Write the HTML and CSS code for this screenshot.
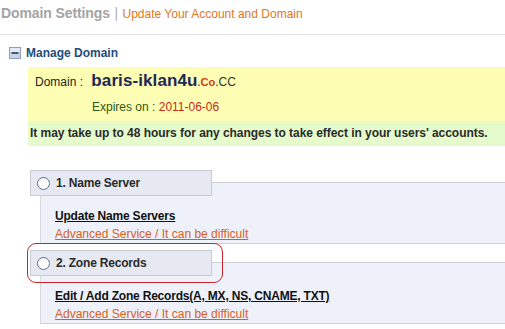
FILE: index.html
```html
<!DOCTYPE html>
<html lang="en">
<head>
    <meta charset="UTF-8">
    <title>Domain Settings</title>
    <link rel="stylesheet" href="styles.css">
</head>
<body>
    <div class="page-head">
        <span class="head-title">Domain Settings</span>
        <span class="head-sep">|</span>
        <span class="head-sub">Update Your Account and Domain</span>
    </div>

    <div class="section-title">
        <svg class="collapse-icon" width="12" height="12" viewBox="0 0 12 12">
            <rect x="0.5" y="0.5" width="11" height="11" fill="#c9d3e3" stroke="#8e9db8"/>
            <rect x="1" y="1" width="10" height="4" fill="#e4eaf3"/>
            <rect x="2.5" y="5" width="7" height="2" fill="#3f5a86"/>
        </svg>
        Manage Domain
    </div>

    <div class="domain-box">
        <div class="domain-row">
            <span class="domain-label">Domain :</span>
            <span class="domain-name">baris-iklan4u</span><span class="domain-co">.Co</span><span class="domain-cc">.CC</span>
        </div>
        <div class="expire-row">
            Expires on : <span class="expire-date">2011-06-06</span>
        </div>
    </div>
    <div class="notice">It may take up to 48 hours for any changes to take effect in your users' accounts.</div>

    <div class="service">
        <div class="service-tab"><span class="radio"></span>1. Name Server</div>
        <div class="service-body">
            <a class="service-link" href="#">Update Name Servers</a>
            <a class="service-note" href="#">Advanced Service / It can be difficult</a>
        </div>
    </div>

    <div class="service">
        <div class="service-tab"><span class="radio"></span>2. Zone Records<span class="highlight"></span></div>
        <div class="service-body">
            <a class="service-link" href="#">Edit / Add Zone Records(A, MX, NS, CNAME, TXT)</a>
            <a class="service-note" href="#">Advanced Service / It can be difficult</a>
        </div>
    </div>
</body>
</html>
```

FILE: styles.css
```css
body {
    font-family: "Liberation Sans", Arial, sans-serif;
    background-color: #fff;
    margin: 0;
    overflow: hidden;
    color: #222;
}

.page-head {
    height: 34px;
    line-height: 26px;
    padding-left: 1px;
    border-bottom: 1px solid #e4e4e4;
    white-space: nowrap;
}

.head-title {
    font-size: 14px;
    font-weight: bold;
    color: #a3a3a3;
    letter-spacing: -0.1px;
}

.head-sep {
    font-size: 14px;
    color: #b0b0b0;
}

.head-sub {
    font-size: 12px;
    color: #e0781e;
}

.section-title {
    display: flex;
    align-items: center;
    gap: 5px;
    height: 28px;
    padding: 4px 0 0 9px;
    font-size: 12px;
    font-weight: bold;
    color: #1f4d7c;
}

.domain-box {
    margin-left: 28px;
    height: 54px;
    background-color: #fdfdb4;
    font-size: 12px;
}

.domain-row {
    height: 27px;
    line-height: 27px;
    padding-left: 7px;
    white-space: nowrap;
}

.domain-label {
    display: inline-block;
    width: 53px;
    color: #222;
}

.domain-name {
    font-size: 17px;
    font-weight: bold;
    color: #1c2858;
    letter-spacing: 0.1px;
}

.domain-co {
    font-size: 11px;
    font-weight: bold;
    color: #d13a1a;
}

.domain-cc {
    font-size: 12px;
    color: #333;
}

.expire-row {
    height: 27px;
    line-height: 27px;
    padding-left: 64px;
    color: #2d5a12;
}

.expire-date {
    color: #c42a1c;
}

.notice {
    margin-left: 28px;
    height: 25px;
    line-height: 25px;
    padding-left: 2px;
    background-color: #e6fbcb;
    font-size: 12px;
    font-weight: bold;
    color: #2a2a2a;
    letter-spacing: -0.05px;
    white-space: nowrap;
}

.service {
    margin-top: 24px;
}

.service + .service {
    margin-top: 6px;
}

.service-tab {
    position: relative;
    z-index: 1;
    display: flex;
    align-items: center;
    gap: 6px;
    width: 174px;
    height: 24px;
    margin-left: 30px;
    padding-left: 6px;
    background-color: #e6e9f1;
    border: 1px solid #c9ccd4;
    font-size: 12px;
    font-weight: bold;
    color: #2a2a2a;
    letter-spacing: -0.2px;
}

.radio {
    width: 11px;
    height: 11px;
    border: 1px solid #5d6f8c;
    border-radius: 50%;
    background-color: #fff;
}

.highlight {
    position: absolute;
    left: -4px;
    top: -8px;
    width: 194px;
    height: 38px;
    border: 1.5px solid #c8242c;
    border-radius: 9px;
}

.service-body {
    margin-top: -14px;
    margin-left: 40px;
    padding: 24px 0 0 14px;
    height: 36px;
    background-color: #eef1f9;
    border-top: 1px solid #cfcfd4;
    border-bottom: 1px solid #cfcfd4;
    border-left: 1px solid #d8d8dd;
    font-size: 12px;
}

.service-link,
.service-note {
    display: block;
    line-height: 18px;
    white-space: nowrap;
}

.service-link {
    font-weight: bold;
    color: #111;
    letter-spacing: -0.2px;
}

.service-note {
    color: #d4601e;
}
```
